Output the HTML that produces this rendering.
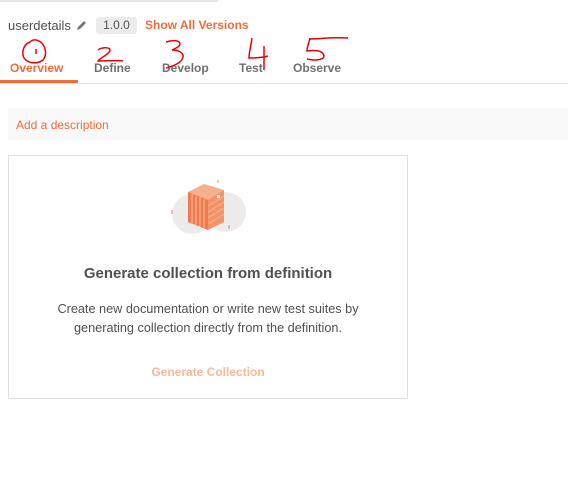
<!DOCTYPE html>
<html><head><style>
body{margin:0;width:568px;height:477px;background:#fff;font-family:"Liberation Sans",sans-serif;position:relative;overflow:hidden}
.a{position:absolute;white-space:nowrap}
</style></head><body>
<div class="a" style="left:0;top:0;width:218px;height:2px;background:#e6e6e6"></div>
<div class="a" style="left:8px;top:18px;font-size:13px;color:#505050">userdetails</div>
<svg class="a" style="left:76px;top:19px" width="12" height="12" viewBox="0 0 12 12"><path d="M1 11l1-3 6-6 2 2-6 6z" fill="#777"/></svg>
<div class="a" style="left:96px;top:17px;width:41px;height:17px;background:#ececec;border-radius:3px;font-size:12px;color:#505050;text-align:center;line-height:17px">1.0.0</div>
<div class="a" style="left:145px;top:18px;font-size:12px;color:#f26b3a;font-weight:bold">Show All Versions</div>
<div class="a" style="left:10px;top:61px;font-size:12px;color:#f26b3a;font-weight:bold">Overview</div>
<div class="a" style="left:94px;top:61px;font-size:12px;color:#707070;font-weight:bold">Define</div>
<div class="a" style="left:162px;top:61px;font-size:12px;color:#707070;font-weight:bold">Develop</div>
<div class="a" style="left:239px;top:61px;font-size:12px;color:#707070;font-weight:bold">Test</div>
<div class="a" style="left:293px;top:61px;font-size:12px;color:#707070;font-weight:bold">Observe</div>
<div class="a" style="left:0;top:83px;width:568px;height:1px;background:#e6e6e6"></div>
<div class="a" style="left:0;top:80px;width:78px;height:3px;background:#f26b3a"></div>
<svg class="a" style="left:0;top:0" width="568" height="90">
<g fill="none" stroke="#e00" stroke-width="1.5">
<path d="M30 42c-6 2-9 10-6 16 4 6 14 6 19 2 5-6 2-16-4-19-4-2-7-1-9 1z"/>
<path d="M36 49v5"/>
<path d="M98 50c4-3 12-3 12 0 0 4-10 8-12 11 8 0 20-1 25 0"/>
<path d="M166 42c6-2 14-2 14 2 0 3-6 5-8 6 5 0 12 2 11 7-1 6-10 9-17 11"/>
<path d="M252 38c-1 8-3 14-3 20 6 0 12 0 19-2M264 46v24"/>
<path d="M310 38c-1 5-3 9-3 13 7-1 16-1 17 5 0 4-10 5-17 3M309 39c10 0 22-2 39-1"/>
</g></svg>
<div class="a" style="left:8px;top:108px;width:560px;height:32px;background:#f9f9f9"></div>
<div class="a" style="left:16px;top:118px;font-size:12px;color:#f26b3a">Add a description</div>
<div class="a" style="left:8px;top:155px;width:398px;height:242px;border:1px solid #e0e0e0"></div>
<svg class="a" style="left:168px;top:178px" width="82" height="64" viewBox="0 0 82 64">
<circle cx="24" cy="36" r="20" fill="#ececec"/><circle cx="58" cy="34" r="20" fill="#ececec"/>
<path d="M20 14l16-8 20 6v32l-16 8-20-8z" fill="#f7b08f"/>
<path d="M20 14l20 8v30l-20-8z" fill="#ee7a4e"/>
<path d="M40 22l16-10v32l-16 8z" fill="#f39468"/>
<path d="M24 16v30M28 18v30M32 19v30M36 21v30" stroke="#fbc4a8" stroke-width="1"/>
<path d="M40 28l16-10M40 34l16-10M40 40l16-10M40 46l16-10" stroke="#f8b595" stroke-width="0.8"/>
<rect x="49" y="17" width="3" height="3" fill="#fff" opacity="0.9"/>
<path d="M4 32v4M50 2v3M61 47v4" stroke="#d88" stroke-width="1"/>
</svg>
<div class="a" style="left:8px;top:265px;width:400px;text-align:center;font-size:15px;font-weight:bold;color:#505050">Generate collection from definition</div>
<div class="a" style="left:8px;top:300px;width:400px;text-align:center;font-size:12.7px;color:#505050;line-height:19px">Create new documentation or write new test suites by<br>generating collection directly from the definition.</div>
<div class="a" style="left:8px;top:365px;width:400px;text-align:center;font-size:12px;font-weight:bold;color:#f8b89a">Generate Collection</div>
</body></html>
